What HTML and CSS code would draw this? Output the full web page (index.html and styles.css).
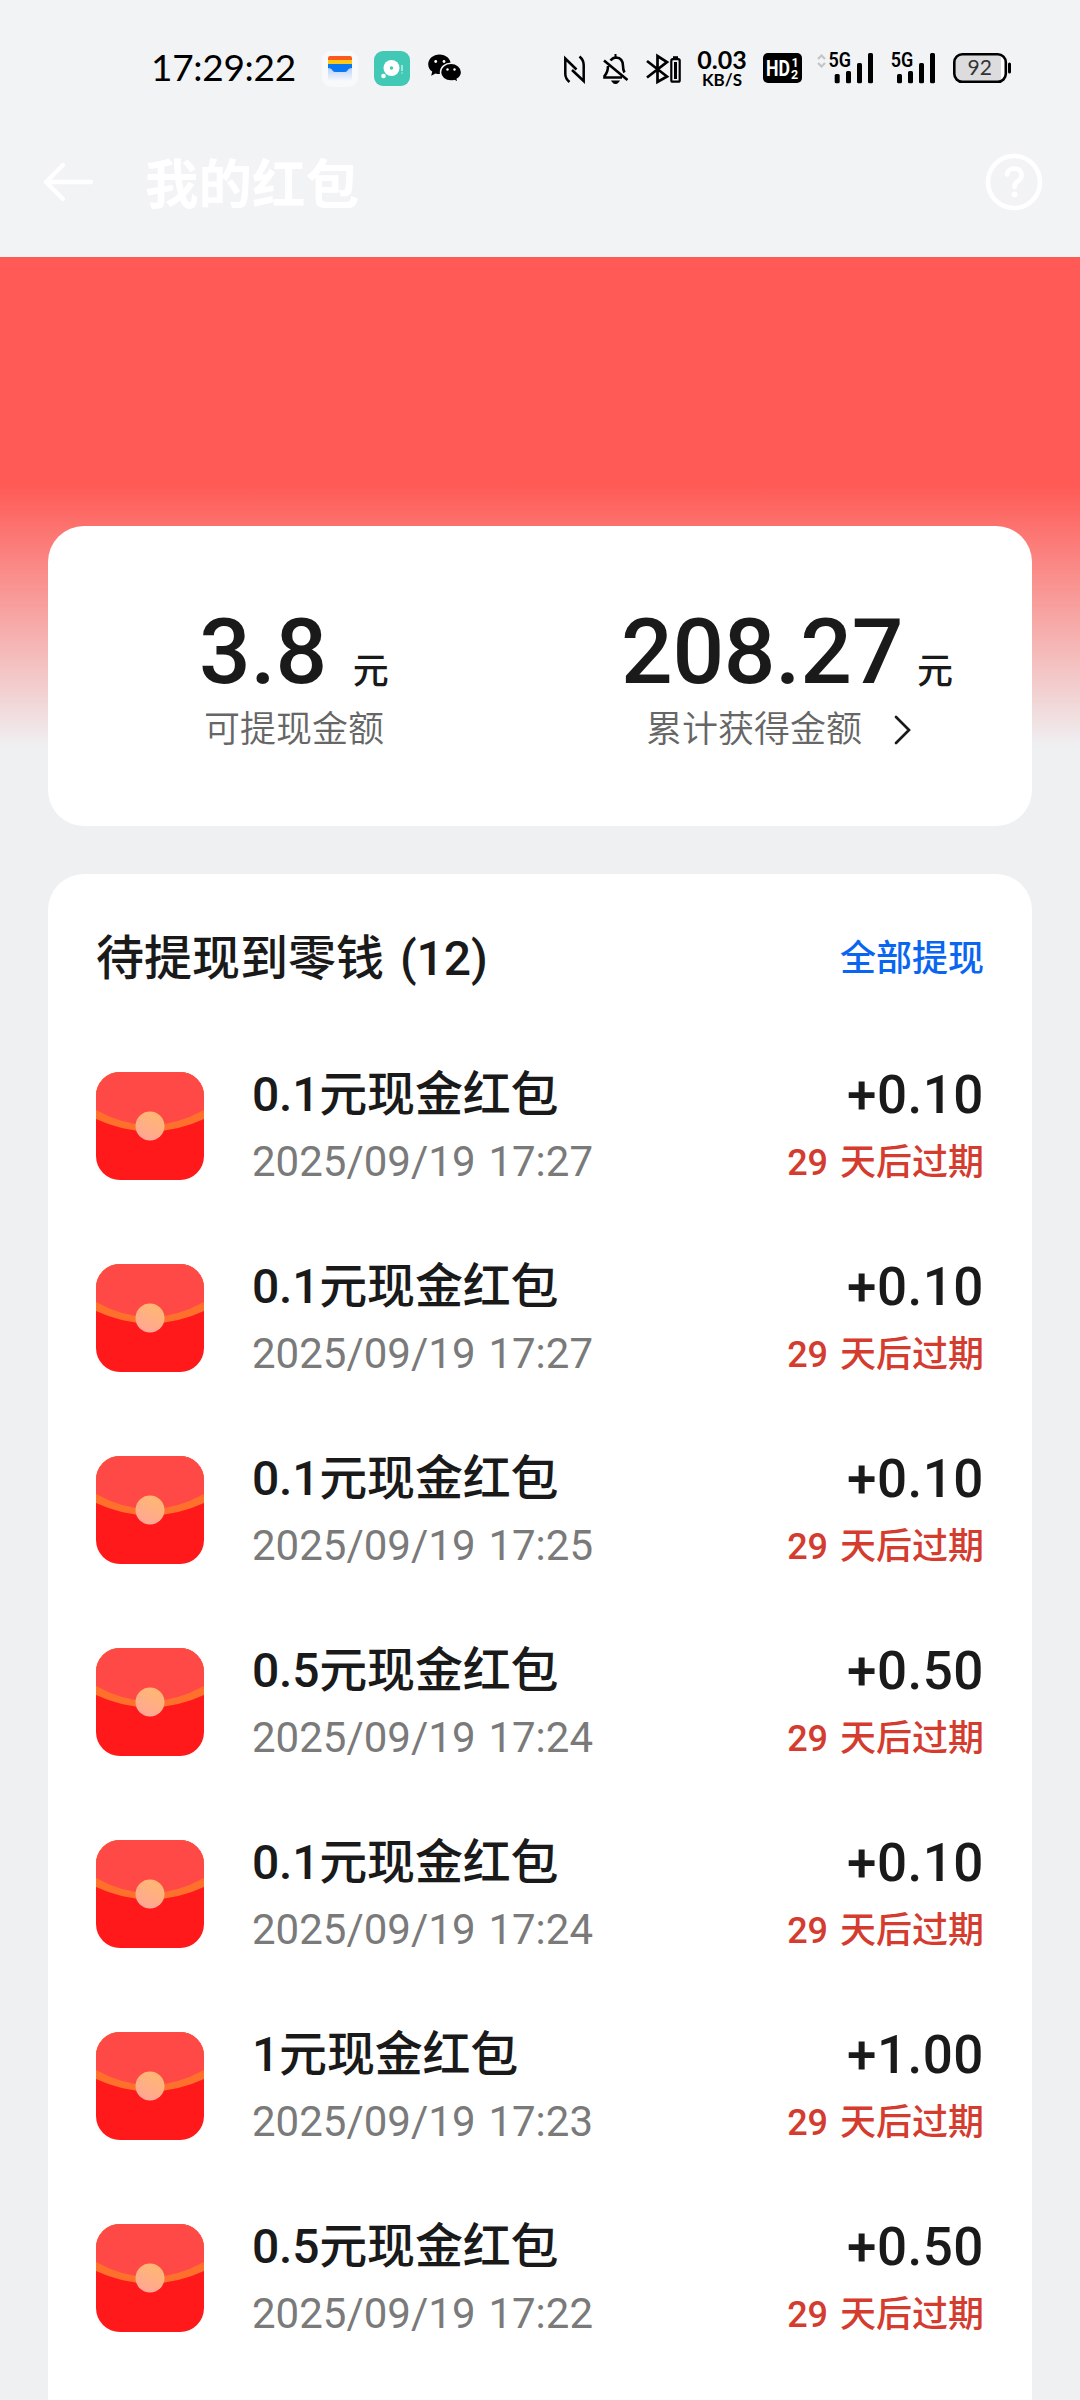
FILE: index.html
```html
<!DOCTYPE html>
<html lang="zh-CN">
<head>
<meta charset="utf-8">
<title>我的红包</title>
<link rel="stylesheet" href="styles.css">
</head>
<body>
<svg class="defs" width="0" height="0">
  <defs>
    <linearGradient id="seal" x1="0.7" y1="0" x2="0.3" y2="1">
      <stop offset="0" stop-color="#ffb871"/><stop offset="1" stop-color="#ffa694"/>
    </linearGradient>
    <linearGradient id="fade" x1="0" y1="0" x2="0" y2="1">
      <stop offset="0" stop-color="#b9d2f8"/><stop offset="1" stop-color="#f7f9fd"/>
    </linearGradient>
    <clipPath id="round"><rect width="108" height="108" rx="24"/></clipPath>
    <symbol id="envelope" viewBox="0 0 108 108">
      <g clip-path="url(#round)">
        <rect width="108" height="108" fill="#ff191b"/>
        <path d="M0 0H108V47Q54 72 0 47Z" fill="#ff702c"/>
        <path d="M0 0H108V38Q54 68 0 38Z" fill="#ff4947"/>
      </g>
      <circle cx="54" cy="54" r="14.5" fill="url(#seal)"/>
    </symbol>
  </defs>
</svg>

<header class="top">
  <div class="status">
    <span class="clock">17:29:22</span>
    <svg class="wallet" width="36" height="48" viewBox="322 44 36 48">
      <rect x="322" y="51" width="36" height="36" rx="9" fill="#f8f9fb"/>
      <path d="M328 68h24v10q0 3-3 3h-18q-3 0-3-3z" fill="url(#fade)"/>
      <path d="M328 60v-2q0-2 2-2h20q2 0 2 2v2z" fill="#fa5a1e"/>
      <rect x="328" y="60" width="24" height="4" fill="#ffc814"/>
      <path d="M328 64h24v4q-3.500 0-4.500 2.500-.8 1.500-3 1.500h-9q-2.200 0-3-1.500-1-2.500-4.500-2.500z" fill="#0a78f5"/>
    </svg>
    <svg class="music" width="36" height="48" viewBox="374 44 36 48">
      <rect x="374" y="51" width="36" height="35" rx="9" fill="#41c9b6"/>
      <circle cx="391.500" cy="68" r="8" fill="#fff"/><circle cx="391.500" cy="68" r="1.700" fill="#41c9b6"/>
      <circle cx="383.500" cy="76" r="2.300" fill="#fff"/>
      <path d="M402 65v6M402 72.500v1" stroke="#d8f5f0" stroke-width="1.300"/>
    </svg>
    <svg class="wechat" width="34" height="48" viewBox="427.500 44 34 48">
      <path d="M439 54.500c-6.300 0-11.300 4.300-11.300 9.700 0 3 1.500 5.600 4 7.400l-1 4.200 4.300-2.400c1.300.4 2.600.6 4 .6 6.300 0 11.300-4.400 11.300-9.800s-5-9.700-11.300-9.700z"/>
      <path d="M450.500 63.300c-5.900 0-10.500 4-10.500 8.900s4.600 8.900 10.500 8.900c1.200 0 2.400-.2 3.500-.5l3.700 2-.9-3.500c2.700-1.700 4.300-4.200 4.300-6.900 0-4.900-4.700-8.900-10.600-8.900z" stroke="#f2f3f5" stroke-width="1.500"/>
      <circle cx="435.200" cy="61.500" r="1.400" fill="#fff"/><circle cx="443.500" cy="61.500" r="1.400" fill="#fff"/>
      <circle cx="447" cy="69.500" r="1.200" fill="#fff"/><circle cx="454" cy="69.500" r="1.200" fill="#fff"/>
    </svg>
    <svg class="nfc" width="23" height="48" viewBox="563 44 23 48" fill="none" stroke="#000" stroke-width="2.500">
      <path d="M569.500 82Q565.300 78.500 565.300 74V58.500L576.500 69.500M579.500 56.500Q583.700 60 583.700 65V81L572 70"/>
    </svg>
    <svg class="bell" width="27" height="48" viewBox="602 44 27 48" fill="none" stroke="#000" stroke-width="2.600">
      <path d="M608 66Q608 72 604.500 76V77.500H622M610.500 60.500Q613 57.500 616 57.500 623 58 623 66 623 70 624.500 72.500M604 60.500L627.500 80"/>
      <path d="M615.500 54v3M613 81.500q2.500 3 5 0z" fill="#000" stroke-width="2"/>
    </svg>
    <svg class="bt" width="37" height="48" viewBox="645 44 37 48" fill="none" stroke="#000" stroke-width="2.700">
      <path d="M647 61L667 76.500 657.500 82V56L667 62 647 77.500"/>
      <rect x="671.300" y="59.200" width="8.400" height="22.500" rx="1.500" stroke-width="2.200"/>
      <path d="M673 57.200h5" stroke-width="2"/><path d="M675.500 62v17" stroke-width="3"/>
    </svg>
    <div class="speed"><span class="rate">0.03</span><span class="unit">KB/S</span></div>
    <svg class="hd" width="40" height="48" viewBox="763 44 40 48">
      <rect x="763" y="53" width="39" height="30" rx="5"/>
      <g fill="#fff" font-family="Roboto, sans-serif" font-weight="700">
        <text x="766" y="76" font-size="22" textLength="24" lengthAdjust="spacingAndGlyphs">HD</text>
        <text x="791.500" y="66.500" font-size="12.500">1</text><text x="791" y="78.500" font-size="12.500">2</text>
      </g>
    </svg>
    <svg class="sim1" width="57" height="48" viewBox="817 44 57 48">
      <path d="M818 59l3.500-3.500 3.500 3.500M818 63l3.500 3.500 3.500-3.500" fill="none" stroke="#c3c4c6" stroke-width="2.200"/>
      <text x="828.500" y="67" class="net" textLength="22.500" lengthAdjust="spacingAndGlyphs">5G</text>
      <g><rect x="834.700" y="74" width="5" height="9.300" rx="1.500"/><rect x="846" y="71" width="5" height="12.300" rx="1.500"/><rect x="857" y="63" width="5" height="20.300" rx="1.500"/><rect x="868" y="53" width="5" height="30.300" rx="1.500"/></g>
    </svg>
    <svg class="sim2" width="46" height="48" viewBox="890 44 46 48">
      <text x="890.700" y="67" class="net" textLength="22.500" lengthAdjust="spacingAndGlyphs">5G</text>
      <g><rect x="897" y="74" width="5" height="9.300" rx="1.500"/><rect x="908" y="71" width="5" height="12.300" rx="1.500"/><rect x="919" y="63" width="5" height="20.300" rx="1.500"/><rect x="930" y="53" width="5" height="30.300" rx="1.500"/></g>
    </svg>
    <svg class="battery" width="59" height="48" viewBox="953 44 59 48">
      <rect x="954.300" y="54.300" width="51.500" height="27.500" rx="8" fill="#fff"/>
      <path d="M962 54h39v28h-39q-8 0-8-8v-12q0-8 8-8z" fill="#dcdcde"/>
      <rect x="954.300" y="54.300" width="51.500" height="27.500" rx="8" fill="none" stroke="#000" stroke-width="2.600"/>
      <rect x="1008" y="62.500" width="3" height="11" rx="1.500"/>
      <text x="979.800" y="75.300" class="level" text-anchor="middle">92</text>
    </svg>
  </div>
  <div class="bar">
    <svg class="back" width="52" height="44" viewBox="0 0 52 44" fill="none" stroke="#fff" stroke-width="4.300" stroke-linecap="round" stroke-linejoin="round"><path d="M49 22H4M21 5L4 22l17 17"/></svg>
    <h1 class="title">我的红包</h1>
    <svg class="help" width="58" height="58" viewBox="0 0 58 58" fill="none" stroke="#fff" stroke-width="4.600" stroke-linecap="round"><circle cx="29" cy="29" r="26"/><path d="M22 21.500Q23 15.500 29.500 15.500 36.500 16 36.500 22.500 36.500 26 32.500 28.500 29.500 30.500 29.500 34"/><circle cx="29.500" cy="41.500" r="3" fill="#fff" stroke="none"/></svg>
  </div>
</header>

<main class="page">
  <section class="card summary">
    <div class="stat stat-left">
      <div class="figure"><span class="num">3.8</span><span class="yuan">元</span></div>
      <div class="label">可提现金额</div>
    </div>
    <div class="stat stat-right">
      <div class="figure"><span class="num">208.27</span><span class="yuan">元</span></div>
      <div class="label">累计获得金额<svg class="chevron" width="18" height="30" viewBox="0 0 18 30" fill="none" stroke="#1a1a1a" stroke-width="2.700" stroke-linecap="round"><path d="M2 2L15 15 2 28"/></svg></div>
    </div>
  </section>

  <section class="card list">
    <div class="list-head"><h2 class="list-title">待提现到零钱 (12)</h2><a class="all">全部提现</a></div>
    <ul class="rows">
      <li class="row"><svg class="env"><use href="#envelope"/></svg><div class="info"><div class="name">0.1元现金红包</div><div class="date">2025/09/19 17:27</div></div><div class="money"><div class="amount">+0.10</div><div class="expire">29 天后过期</div></div></li>
      <li class="row"><svg class="env"><use href="#envelope"/></svg><div class="info"><div class="name">0.1元现金红包</div><div class="date">2025/09/19 17:27</div></div><div class="money"><div class="amount">+0.10</div><div class="expire">29 天后过期</div></div></li>
      <li class="row"><svg class="env"><use href="#envelope"/></svg><div class="info"><div class="name">0.1元现金红包</div><div class="date">2025/09/19 17:25</div></div><div class="money"><div class="amount">+0.10</div><div class="expire">29 天后过期</div></div></li>
      <li class="row"><svg class="env"><use href="#envelope"/></svg><div class="info"><div class="name">0.5元现金红包</div><div class="date">2025/09/19 17:24</div></div><div class="money"><div class="amount">+0.50</div><div class="expire">29 天后过期</div></div></li>
      <li class="row"><svg class="env"><use href="#envelope"/></svg><div class="info"><div class="name">0.1元现金红包</div><div class="date">2025/09/19 17:24</div></div><div class="money"><div class="amount">+0.10</div><div class="expire">29 天后过期</div></div></li>
      <li class="row"><svg class="env"><use href="#envelope"/></svg><div class="info"><div class="name">1元现金红包</div><div class="date">2025/09/19 17:23</div></div><div class="money"><div class="amount">+1.00</div><div class="expire">29 天后过期</div></div></li>
      <li class="row"><svg class="env"><use href="#envelope"/></svg><div class="info"><div class="name">0.5元现金红包</div><div class="date">2025/09/19 17:22</div></div><div class="money"><div class="amount">+0.50</div><div class="expire">29 天后过期</div></div></li>
    </ul>
  </section>
</main>
</body>
</html>
```
FILE: styles.css
```css
* { box-sizing: border-box; margin: 0; padding: 0; }
body {
  width: 1080px; height: 2400px; overflow: hidden;
  display: flex; flex-direction: column;
  background: #eff0f2; color: #1a1a1a;
  font-family: Roboto, "Noto Sans CJK SC", sans-serif;
}
svg { display: block; flex: none; }
svg.defs { height: 0; }

.top { height: 257px; flex: none; background: #f2f3f5; }
.status { display: flex; height: 136px; padding: 44px 0 0 151px; color: #000; }
.clock { width: 171px; font: 400 37px/46px Lato, sans-serif; letter-spacing: -0.3px; white-space: nowrap; }
.music { margin-left: 16px; }
.wechat { margin-left: 17.5px; }
.nfc { margin-left: 101.5px; }
.bell { margin-left: 16px; }
.bt { margin-left: 16px; }
.speed { width: 54px; margin-left: 13px; display: flex; flex-direction: column; align-items: center; font-family: Lato, sans-serif; font-weight: 700; }
.rate { font-size: 25px; line-height: 18px; padding-top: 6px; }
.unit { font-size: 17px; line-height: 14px; padding-top: 5px; }
.hd { margin-left: 14px; }
.sim1 { margin-left: 14px; }
.sim2 { margin-left: 16px; }
.battery { margin-left: 17px; }
.net { font: 600 19.5px Roboto, sans-serif; }
.level { font: 400 21px Lato, sans-serif; fill: #333; }

.bar { display: flex; align-items: center; height: 93px; padding: 0 37px 2px 42px; }
.title { flex: 1; margin-left: 51px; font-size: 53.5px; line-height: 80px; font-weight: 700; color: #fff; padding-top: 8px; }

.page {
  flex: 1; display: flex; flex-direction: column; gap: 48px;
  padding: 269px 48px 0;
  background: linear-gradient(#ff5a55 0, #ff5a55 228px, #eff0f2 490px);
}
.card { background: #fff; border-radius: 36px; flex: none; }
.summary { display: flex; height: 300px; padding-top: 79px; }
.stat { width: 492px; }
.stat-left { padding-left: 151px; }
.stat-right { padding-left: 81px; }
.figure { display: flex; align-items: baseline; height: 94px; line-height: 94px; white-space: nowrap; }
.num { font-size: 91px; font-weight: 500; letter-spacing: -0.3px; }
.yuan { position: relative; top: 1px; font-size: 36px; font-weight: 500; margin-left: 26px; }
.stat-right .yuan { margin-left: 14px; }
.label { display: flex; align-items: center; height: 60px; margin-top: 1px; font-size: 36px; line-height: 60px; font-weight: 350; color: #666; padding-left: 5px; }
.stat-right .label { padding-left: 25px; }
.chevron { margin-left: 32px; }

.list { height: 1600px; padding: 57px 48px 0; }
.list-head { display: flex; justify-content: space-between; align-items: center; height: 56px; }
.list-title { font-size: 48px; line-height: 56px; font-weight: 500; word-spacing: 4px; }
.all { font-size: 36px; line-height: 56px; font-weight: 500; color: #0a66f0; }
.rows { list-style: none; display: flex; flex-direction: column; gap: 56px; margin-top: 71px; }
.row { display: flex; align-items: center; height: 136px; }
.env { width: 108px; height: 108px; }
.info { flex: 1; margin-left: 48px; padding-top: 3px; }
.name { font-size: 48px; line-height: 68px; font-weight: 500; letter-spacing: -0.2px; }
.date { font-size: 42px; line-height: 66px; font-weight: 400; color: #7a7a7a; word-spacing: 2.500px; }
.money { text-align: right; padding-top: 5px; }
.amount { font-size: 53px; line-height: 68px; font-weight: 500; letter-spacing: 0.5px; }
.expire { font-size: 36px; line-height: 68px; font-weight: 500; color: #d43c30; word-spacing: 3px; }
```
